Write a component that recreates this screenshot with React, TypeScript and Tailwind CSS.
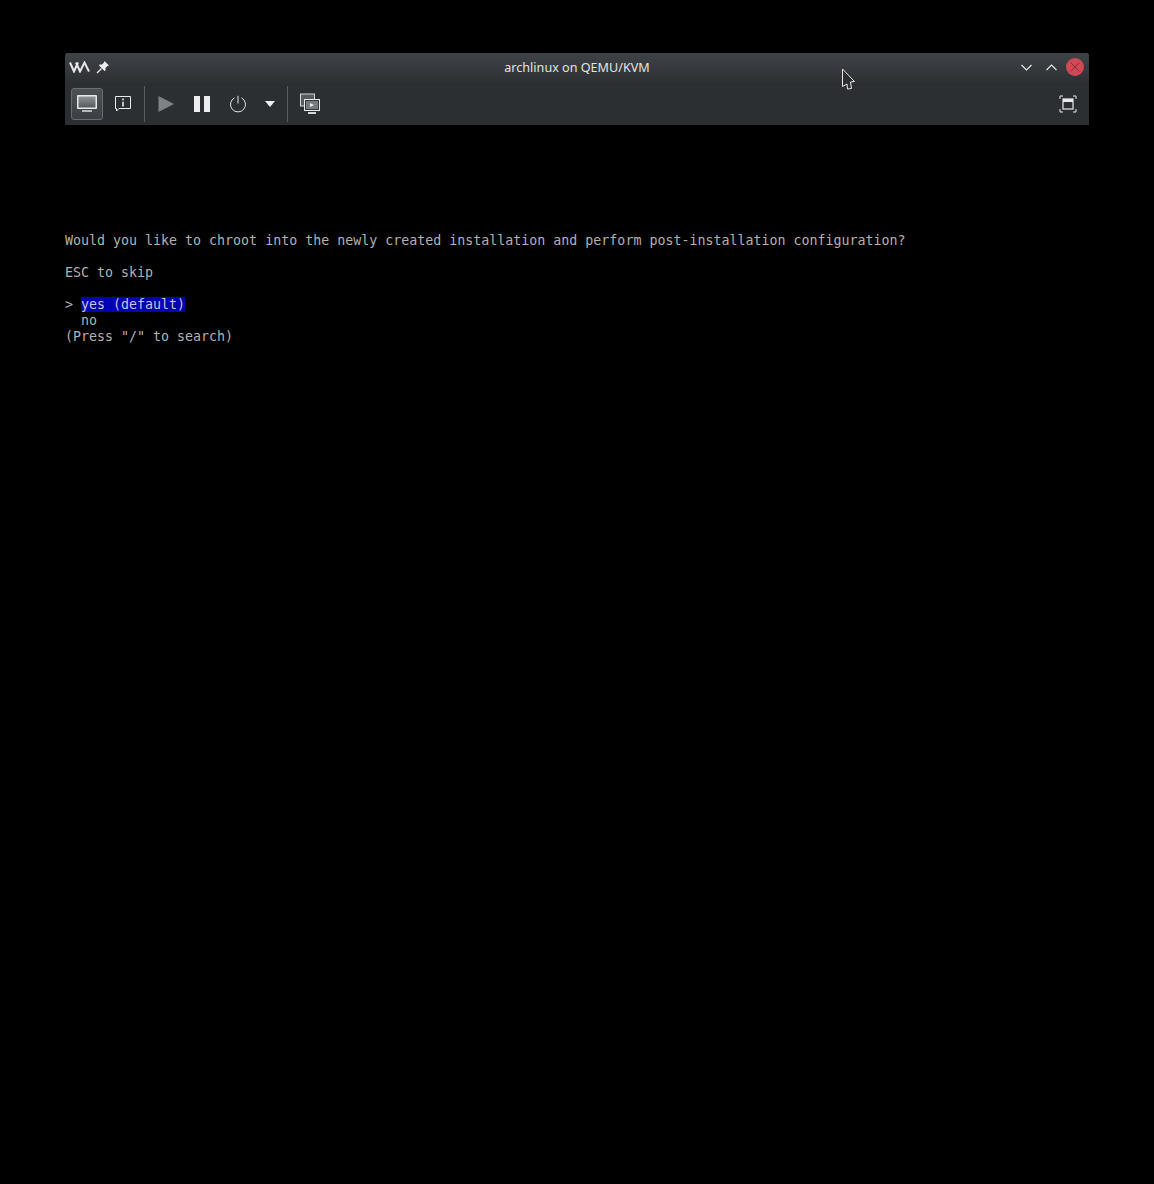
import React from "react";

const Sep = () => <div className="w-px h-[36px] bg-[#5a5e62]" />;

export default function App() {
  return (
    <div className="relative h-[1184px] bg-black pt-[53px] px-[65px] overflow-hidden">
      {/* window chrome */}
      <div className="w-[1024px] h-[72px] rounded-t-[3px] flex flex-col bg-[#2c2f32]">
        <div className="relative h-[30px] shrink-0 flex items-center justify-between pl-[4px] pr-[5px] pb-[2px] rounded-t-[3px] bg-gradient-to-b from-[#3f4348] to-[#2d3033]">
          <div className="flex items-center gap-[5px]">
            <svg width="21" height="12" viewBox="0 0 21 12" fill="none">
              <path d="M1 1.5 L5 10.5 L9 1.5 M7 1.5 L11 10.5 L15.5 1.5 L20 10.5" stroke="#e4e6e8" strokeWidth="2" />
            </svg>
            <svg width="14" height="14" viewBox="0 0 14 14" className="ml-[1px]">
              <path d="M8.5 1 L13 5.5 L11.5 6 L9.5 8 L9.5 10.5 L8.5 11 L3 5.5 L3.5 4.5 L6 4.5 L8 2.5 Z" fill="#eceef0" />
              <path d="M5.5 8.5 L1 13" stroke="#eceef0" strokeWidth="1.3" />
            </svg>
          </div>
          <span className="absolute left-0 right-0 top-0 text-center text-[12.6px] text-[#e4e6e8] font-['Noto_Sans',sans-serif] leading-[29px] opacity-[0.99]">
            archlinux on QEMU/KVM
          </span>
          <div className="flex items-center gap-[9px]">
            <svg className="mr-[1px]" width="15" height="15" viewBox="0 0 15 15" fill="none">
              <path d="M2.5 5 L7.5 10 L12.5 5" stroke="#e8eaec" strokeWidth="1.1" />
            </svg>
            <svg className="mr-[-2px]" width="15" height="15" viewBox="0 0 15 15" fill="none">
              <path d="M2.5 10 L7.5 5 L12.5 10" stroke="#e8eaec" strokeWidth="1.1" />
            </svg>
            <div className="w-[18px] h-[18px] rounded-full bg-[#cf4a55] flex items-center justify-center">
              <svg width="12" height="12" viewBox="0 0 12 12" fill="none">
                <path d="M1.5 1.5 L10.5 10.5 M10.5 1.5 L1.5 10.5" stroke="#8f2a33" strokeWidth="1" />
              </svg>
            </div>
          </div>
        </div>
        <div className="flex-1 flex items-center pl-[6px] pr-[12px] justify-between">
          <div className="flex items-center">
            <div className="w-[32px] h-[32px] rounded-[3px] border border-[#6a6e72] bg-gradient-to-b from-[#4c5054] to-[#3c4044] flex items-center justify-center">
              <svg width="22" height="20" viewBox="0 0 22 20">
                <defs>
                  <linearGradient id="scr" x1="0" y1="0" x2="0" y2="1">
                    <stop offset="0" stopColor="#8f9396" />
                    <stop offset="1" stopColor="#55595d" />
                  </linearGradient>
                </defs>
                <rect x="1" y="1" width="20" height="14" rx="1" fill="#e6e8ea" />
                <rect x="2.5" y="2.5" width="17" height="11" fill="url(#scr)" />
                <rect x="6" y="16" width="10" height="2" fill="#b4b7ba" />
              </svg>
            </div>
            <div className="w-[40px] flex justify-center">
              <svg width="18" height="18" viewBox="0 0 18 18" fill="none">
                <path d="M1.5 1.5 H16.5 V13.5 H5 L2.5 16 V13.5 H1.5 Z" stroke="#e8eaec" strokeWidth="1" />
                <path d="M9 3.5 V5.2" stroke="#e8eaec" strokeWidth="1.6" />
                <path d="M9 6.8 V11.5" stroke="#e8eaec" strokeWidth="1.6" />
              </svg>
            </div>
            <div className="ml-[1px]"><Sep /></div>
            <div className="w-[42px] flex justify-center">
              <svg width="18" height="18" viewBox="0 0 18 18">
                <path d="M1.5 1 L17 9 L1.5 17 Z" fill="#7e8286" />
              </svg>
            </div>
            <div className="w-[30px] flex justify-center">
              <div className="flex gap-[4px]">
                <div className="w-[6px] h-[16px] bg-[#eceef0]" />
                <div className="w-[6px] h-[16px] bg-[#eceef0]" />
              </div>
            </div>
            <div className="w-[42px] flex justify-center">
              <svg width="18" height="18" viewBox="0 0 18 18" fill="none">
                <path d="M5.5 2.8 A7.5 7.5 0 1 0 12.5 2.8" stroke="#e0e2e4" strokeWidth="1" />
                <path d="M9 0.8 V8.5" stroke="#e0e2e4" strokeWidth="1" />
              </svg>
            </div>
            <div className="w-[22px] flex justify-center">
              <svg width="10" height="6" viewBox="0 0 10 6">
                <path d="M0 0 H10 L5 6 Z" fill="#eceef0" />
              </svg>
            </div>
            <div className="ml-[6px]">
              <Sep />
            </div>
            <div className="w-[44px] flex justify-center">
              <svg width="22" height="22" viewBox="0 0 22 22">
                <rect x="1.5" y="1" width="14" height="12" fill="#585c60" stroke="#d4d6d8" strokeWidth="1" />
                <rect x="5.5" y="6.5" width="15" height="11" fill="#34373a" stroke="#e8eaec" strokeWidth="1" />
                <rect x="7" y="8" width="12" height="8" fill="#777b7f" />
                <path d="M11 10 L15 12 L11 14 Z" fill="#e8eaec" />
                <rect x="9" y="19" width="8" height="2" fill="#d4d6d8" />
              </svg>
            </div>
          </div>
          <svg width="18" height="18" viewBox="0 0 18 18" fill="none">
            <path d="M1 4 V1 H4 M14 1 H17 V4 M17 14 V17 H14 M4 17 H1 V14" stroke="#e8eaec" strokeWidth="1" />
            <rect x="4" y="4" width="10" height="10" stroke="#e8eaec" strokeWidth="1.2" />
            <rect x="4" y="4" width="10" height="3" fill="#e8eaec" />
          </svg>
        </div>
      </div>

      {/* terminal */}
      <div className="mt-[108px] font-['DejaVu_Sans_Mono',monospace] text-[13.3px] leading-[16px] text-[#b4b4b4] whitespace-pre opacity-[0.99]">
        <div>Would you like to chroot into the newly created installation and perform post-installation configuration?</div>
        <div className="h-[16px]" />
        <div>ESC to skip</div>
        <div className="h-[16px]" />
        <div>
          {"> "}
          <span className="bg-[#0000b4] text-[#c8c8e8]">yes (default)</span>
        </div>
        <div>{"  no"}</div>
        <div>(Press "/" to search)</div>
      </div>

      {/* mouse pointer */}
      <svg className="absolute left-[841px] top-[68px]" width="15" height="23" viewBox="0 0 15 23" fill="#2a2c2e">
        <path d="M1.5 1 L13.5 13.5 L9.5 14 L10.5 20.5 L6.5 21 L6 16 L1.5 18.5 Z" stroke="#e8eaec" strokeWidth="1" />
      </svg>
    </div>
  );
}
